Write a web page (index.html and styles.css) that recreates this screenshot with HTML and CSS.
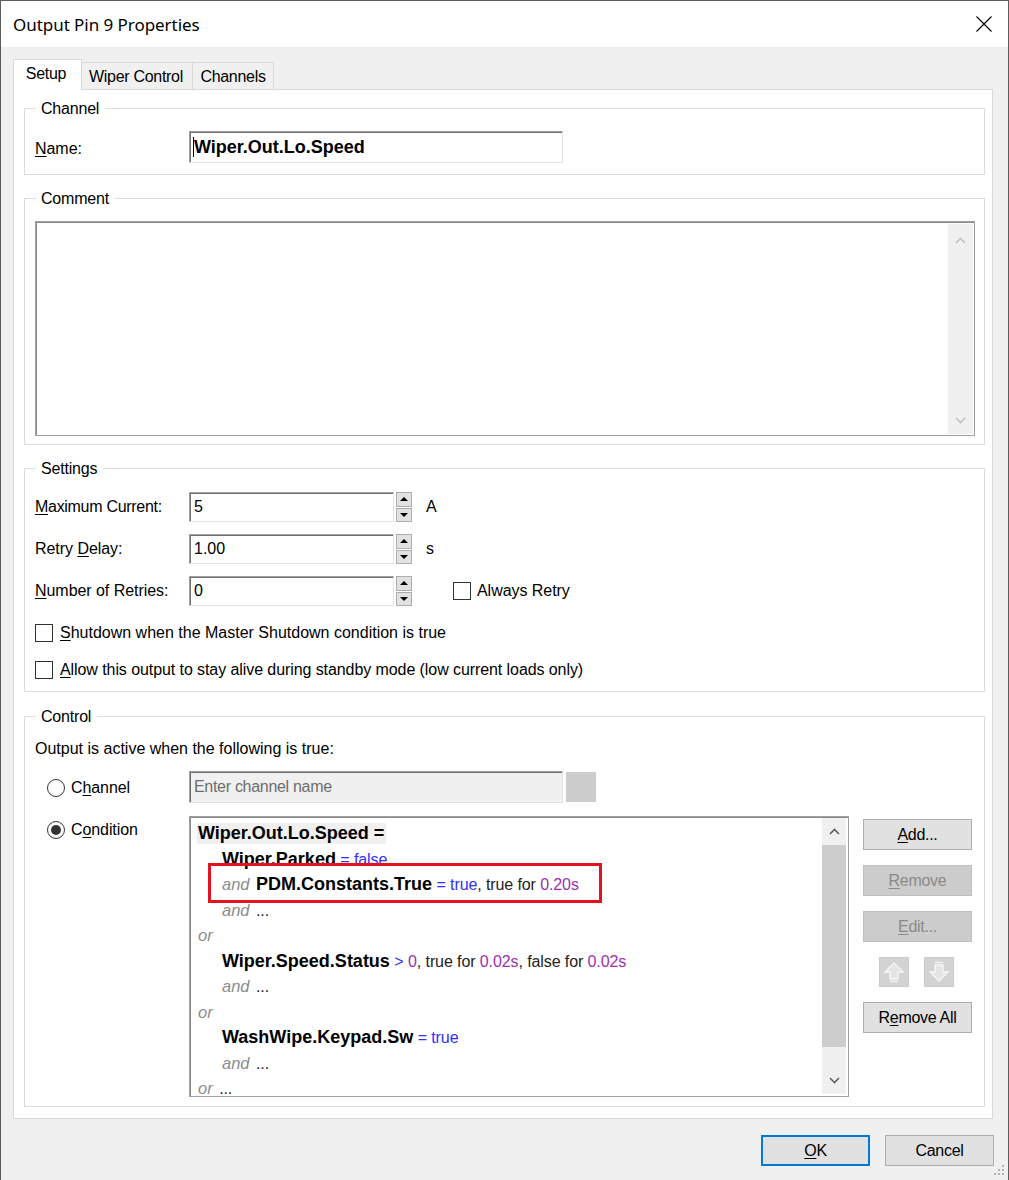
FILE: index.html
```html
<!DOCTYPE html>
<html>
<head>
<meta charset="utf-8">
<title>Output Pin 9 Properties</title>
<link rel="stylesheet" href="styles.css">
</head>
<body>
<div class="window">
  <div class="titlebar">
    <span class="title">Output Pin 9 Properties</span>
    <svg class="close" width="16" height="16" viewBox="0 0 16 16"><path d="M0.5 0.5 L15.5 15.5 M15.5 0.5 L0.5 15.5" stroke="#000" stroke-width="1.1" fill="none"/></svg>
  </div>
  <div class="client">
    <div class="tabs">
      <div class="tab active">Setup</div>
      <div class="tab t-wiper">Wiper Control</div>
      <div class="tab t-chan">Channels</div>
    </div>
    <div class="tabpage">
      <fieldset class="group g-channel">
        <legend>Channel</legend>
        <div class="row">
          <span class="lbl name-lbl"><u>N</u>ame:</span>
          <div class="field name-field"><span class="caret"></span>Wiper.Out.Lo.Speed</div>
        </div>
      </fieldset>

      <fieldset class="group g-comment">
        <legend>Comment</legend>
        <div class="memo">
          <div class="memo-body"></div>
          <div class="vscroll disabled">
            <svg width="11" height="7" viewBox="0 0 11 7"><path d="M1 6 L5.5 1.5 L10 6" stroke="#c2c2c2" stroke-width="1.6" fill="none"/></svg>
            <svg width="11" height="7" viewBox="0 0 11 7"><path d="M1 1 L5.5 5.5 L10 1" stroke="#c2c2c2" stroke-width="1.6" fill="none"/></svg>
          </div>
        </div>
      </fieldset>

      <fieldset class="group g-settings">
        <legend>Settings</legend>
        <div class="srow">
          <span class="lbl lbl-max"><u>M</u>aximum Current:</span>
          <div class="field num">5</div>
          <div class="spin"><span class="sp up"></span><span class="sp dn"></span></div>
          <span class="unit">A</span>
        </div>
        <div class="srow">
          <span class="lbl">Retry <u>D</u>elay:</span>
          <div class="field num">1.00</div>
          <div class="spin"><span class="sp up"></span><span class="sp dn"></span></div>
          <span class="unit">s</span>
        </div>
        <div class="srow">
          <span class="lbl"><u>N</u>umber of Retries:</span>
          <div class="field num">0</div>
          <div class="spin"><span class="sp up"></span><span class="sp dn"></span></div>
          <label class="check always"><span class="box"></span>Always Retry</label>
        </div>
        <label class="check c1"><span class="box"></span><span><u>S</u>hutdown when the Master Shutdown condition is true</span></label>
        <label class="check c2"><span class="box"></span><span><u>A</u>llow this output to stay alive during standby mode (low current loads only)</span></label>
      </fieldset>

      <fieldset class="group g-control">
        <legend>Control</legend>
        <div class="intro">Output is active when the following is true:</div>
        <div class="crow">
          <label class="radio"><span class="circle"></span>C<u>h</u>annel</label>
          <div class="field disabled-field">Enter channel name</div>
          <div class="pick"></div>
        </div>
        <div class="crow cond">
          <label class="radio"><span class="circle on"></span>C<u>o</u>ndition</label>
          <div class="list">
            <div class="list-body">
              <div class="ln"><span class="hl"><b class="nm">Wiper.Out.Lo.Speed =</b></span></div>
              <div class="ln i1"><b class="nm">Wiper.Parked</b> <span class="v">= false</span></div>
              <div class="ln i1"><i class="kw">and</i> <b class="nm">PDM.Constants.True</b> <span class="v">= true</span><span class="t">, true for </span><span class="n">0.20s</span></div>
              <div class="ln i1"><i class="kw">and</i> <span class="t">...</span></div>
              <div class="ln"><i class="kw">or</i></div>
              <div class="ln i1"><b class="nm">Wiper.Speed.Status</b> <span class="v">&gt;</span> <span class="n">0</span><span class="t">, true for </span><span class="n">0.02s</span><span class="t">, false for </span><span class="n">0.02s</span></div>
              <div class="ln i1"><i class="kw">and</i> <span class="t">...</span></div>
              <div class="ln"><i class="kw">or</i></div>
              <div class="ln i1"><b class="nm">WashWipe.Keypad.Sw</b> <span class="v">= true</span></div>
              <div class="ln i1"><i class="kw">and</i> <span class="t">...</span></div>
              <div class="ln"><i class="kw">or</i> <span class="t">...</span></div>
              <div class="redbox"></div>
            </div>
            <div class="vscroll enabled">
              <div class="arr"><svg width="11" height="7" viewBox="0 0 11 7"><path d="M1 6 L5.5 1.5 L10 6" stroke="#606060" stroke-width="1.6" fill="none"/></svg></div>
              <div class="thumb"></div>
              <div class="track"></div>
              <div class="arr"><svg width="11" height="7" viewBox="0 0 11 7"><path d="M1 1 L5.5 5.5 L10 1" stroke="#606060" stroke-width="1.6" fill="none"/></svg></div>
            </div>
          </div>
          <div class="btncol">
            <div class="btn"><u>A</u>dd...</div>
            <div class="btn off"><u>R</u>emove</div>
            <div class="btn off"><u>E</u>dit...</div>
            <div class="arrows">
              <div class="abtn"><svg width="22" height="22" viewBox="0 0 22 22"><path d="M11 2 L20 11 L15 11 L15 18 L7 18 L7 11 L2 11 Z" fill="#e4e4e4" stroke="#f6f6f6" stroke-width="1.4"/><path d="M7 20.5 H15" stroke="#f2f2f2" stroke-width="1.5"/></svg></div>
              <div class="abtn"><svg width="22" height="22" viewBox="0 0 22 22"><path d="M7 1.5 H15" stroke="#f2f2f2" stroke-width="1.5"/><path d="M7 4 L15 4 L15 11 L20 11 L11 20 L2 11 L7 11 Z" fill="#e4e4e4" stroke="#f6f6f6" stroke-width="1.4"/></svg></div>
            </div>
            <div class="btn">R<u>e</u>move All</div>
          </div>
        </div>
      </fieldset>
    </div>
    <div class="footer">
      <div class="btn ok"><u>O</u>K</div>
      <div class="btn">Cancel</div>
    </div>
    <svg class="grip" width="12" height="12" viewBox="0 0 12 12">
      <rect x="8" y="0" width="2" height="2" fill="#b4b4b4"/>
      <rect x="4" y="4" width="2" height="2" fill="#b4b4b4"/>
      <rect x="8" y="4" width="2" height="2" fill="#b4b4b4"/>
      <rect x="0" y="8" width="2" height="2" fill="#b4b4b4"/>
      <rect x="4" y="8" width="2" height="2" fill="#b4b4b4"/>
      <rect x="8" y="8" width="2" height="2" fill="#b4b4b4"/>
    </svg>
  </div>
</div>
</body>
</html>
```

FILE: styles.css
```css
* { box-sizing: border-box; }
html, body { margin: 0; padding: 0; }
body {
  width: 1009px;
  height: 1180px;
  overflow: hidden;
  background: #f0f0f0;
  font-family: "Liberation Sans", Arial, sans-serif;
  font-size: 16px;
  color: #000;
}
u { text-decoration: underline; text-underline-offset: 2px; }

.window {
  width: 1009px;
  height: 1180px;
  border: 1px solid #5c5c5c;
  border-bottom: none;
  background: #f0f0f0;
  display: flex;
  flex-direction: column;
}
.titlebar {
  height: 46px;
  flex: none;
  background: #fff;
  display: flex;
  align-items: center;
  justify-content: space-between;
  padding: 0 16px 0 12px;
}
.title {
  font-family: "Noto Sans", sans-serif;
  font-size: 17px;
  letter-spacing: -0.05px;
  color: #000;
}
.close { display: block; }

.client {
  flex: 1;
  position: relative;
  padding: 12px 0 0 12px;
  display: flex;
  flex-direction: column;
}

/* tabs */
.tabs {
  display: flex;
  align-items: flex-end;
  height: 30px;
  position: relative;
  z-index: 2;
}
.tab {
  height: 27px;
  border: 1px solid #d9d9d9;
  border-bottom: none;
  background: #f0f0f0;
  display: flex;
  align-items: center;
  justify-content: center;
  font-size: 16px;
  letter-spacing: -0.3px;
  padding-top: 1px;
}
.tab.active {
  width: 69px;
  height: 31px;
  margin-bottom: -1px;
  background: #fff;
  padding-top: 0;
  padding-bottom: 2px;
  padding-right: 3px;
}
.t-wiper { width: 112px; margin-left: -1px; padding-right: 2px; }
.t-chan { width: 82px; margin-left: -1px; }

.tabpage {
  width: 980px;
  background: #fff;
  border: 1px solid #d9d9d9;
  padding: 9px 7px 11px 10px;
  position: relative;
  z-index: 1;
}

/* group boxes */
.group {
  margin: 0;
  width: 961px;
  border: 1px solid #dcdcdc;
  padding: 14px 10px 11px 10px;
  min-width: 0;
}
.group legend {
  margin-left: 1px;
  padding: 0 6px 0 5px;
  line-height: 19px;
  font-size: 16px;
  letter-spacing: -0.2px;
  color: #000;
}
.g-channel { padding-top: 13px; }
.g-comment { margin-top: 14px; padding-top: 13px; padding-bottom: 8px; }
.g-settings { margin-top: 14px; padding-top: 14px; padding-bottom: 10px; }
.g-control { margin-top: 15px; padding-top: 13px; padding-bottom: 9px; }

.row, .srow, .crow { display: flex; align-items: center; }
.lbl {
  width: 154px;
  flex: none;
  letter-spacing: -0.05px;
}
.lbl-max { letter-spacing: -0.3px; }
.name-lbl { padding-top: 4px; }

.field {
  height: 32px;
  background: #fff;
  border: 1px solid #e3e3e3;
  border-top-color: #a0a0a0;
  border-left-color: #a0a0a0;
  box-shadow: inset 1px 1px 0 #707070;
  display: flex;
  align-items: center;
  padding-left: 4px;
  white-space: nowrap;
}
.name-field {
  width: 374px;
  font-weight: bold;
  font-size: 18px;
  letter-spacing: 0;
  padding-left: 3px;
}
.caret {
  display: inline-block;
  width: 1px;
  height: 20px;
  background: #000;
}

/* comment memo */
.memo {
  width: 940px;
  height: 215px;
  border: 1px solid #a0a0a0;
  box-shadow: inset 1px 1px 0 #8a8a8a;
  display: flex;
  background: #fff;
  padding: 2px 1px 1px 1px;
}
.memo-body { flex: 1; }
.vscroll {
  width: 25px;
  background: #f0f0f0;
  display: flex;
  flex-direction: column;
  align-items: center;
}
.vscroll.disabled {
  justify-content: space-between;
  padding: 13px 0 10px;
}

/* settings */
.srow { height: 30px; margin-bottom: 12px; }
.srow .field.num { width: 205px; height: 30px; font-size: 16px; padding-left: 4px; }
.spin {
  width: 16px;
  height: 30px;
  margin-left: 2px;
  display: flex;
  flex-direction: column;
  gap: 1px;
}
.sp {
  flex: 1;
  background: #e1e1e1;
  border: 1px solid #adadad;
  display: flex;
  align-items: center;
  justify-content: center;
}
.sp::after {
  content: "";
  width: 0;
  height: 0;
  border-left: 4px solid transparent;
  border-right: 4px solid transparent;
}
.sp.up::after { border-bottom: 4px solid #000; }
.sp.dn::after { border-top: 4px solid #000; }
.unit { margin-left: 14px; }

.check {
  display: flex;
  align-items: center;
  letter-spacing: 0;
  white-space: nowrap;
}
.box {
  width: 18px;
  height: 18px;
  border: 1px solid #333;
  background: #fff;
  flex: none;
  margin-right: 7px;
}
.always { margin-left: 41px; letter-spacing: -0.05px; }
.always .box { margin-right: 6px; }
.check.c1 { height: 22px; margin-top: 16px; }
.check.c2 { height: 22px; margin-top: 15px; letter-spacing: -0.08px; }

/* control */
.intro { line-height: 20px; letter-spacing: 0; }
.crow { margin-top: 12px; }
.crow.cond { margin-top: 13px; align-items: flex-start; }
.radio {
  width: 154px;
  flex: none;
  display: flex;
  align-items: center;
  padding-left: 12px;
  letter-spacing: -0.1px;
  height: 32px;
  padding-top: 1px;
}
.cond .radio { height: 26px; }
.circle {
  width: 18px;
  height: 18px;
  border: 1px solid #333;
  border-radius: 50%;
  background: #fff;
  margin-right: 6px;
  flex: none;
  display: flex;
  align-items: center;
  justify-content: center;
}
.circle.on::after {
  content: "";
  width: 10px;
  height: 10px;
  border-radius: 50%;
  background: #333;
}
.disabled-field {
  width: 374px;
  background: #f0f0f0;
  color: #6d6d6d;
  letter-spacing: -0.3px;
  padding-left: 4px;
}
.pick {
  width: 30px;
  height: 30px;
  margin-left: 3px;
  background: #cccccc;
}

.list {
  width: 660px;
  height: 281px;
  border: 1px solid #a0a0a0;
  box-shadow: inset 1px 1px 0 #8a8a8a;
  background: #fff;
  display: flex;
  padding: 1px 2px 2px 1px;
  flex: none;
}
.list-body {
  flex: 1;
  position: relative;
  padding: 3px 0 0 7px;
  overflow: hidden;
  white-space: nowrap;
}
.ln {
  height: 25.5px;
  line-height: 25.5px;
  white-space: pre;
}
.ln.i1 { padding-left: 24px; }
.hl { background: #f0f0f0; padding: 2px 2px 2px 1px; margin-left: -1px; }
.nm { font-size: 18px; font-weight: bold; letter-spacing: 0; color: #000; }
.kw { font-size: 16.5px; color: #8c8c8c; letter-spacing: 0; margin-right: 2px; }
.v { font-size: 16px; color: #2f2fff; letter-spacing: -0.1px; }
.t { font-size: 16px; color: #222; letter-spacing: -0.1px; }
.n { font-size: 16px; color: #9b30b0; letter-spacing: -0.1px; }
.redbox {
  position: absolute;
  left: 17px;
  top: 45px;
  width: 394px;
  height: 40px;
  border: 3px solid #e3121f;
}
.vscroll.enabled { width: 24px; }
.vscroll .arr {
  height: 27px;
  width: 100%;
  display: flex;
  align-items: center;
  justify-content: center;
}
.thumb { width: 24px; height: 202px; background: #cdcdcd; }
.track { flex: 1; }

.btncol {
  margin-left: 14px;
  width: 109px;
  display: flex;
  flex-direction: column;
  gap: 15px;
  padding-top: 3px;
}
.btn {
  height: 31px;
  width: 109px;
  background: #e1e1e1;
  border: 1px solid #adadad;
  display: flex;
  align-items: center;
  justify-content: center;
  letter-spacing: -0.3px;
  color: #000;
}
.btn.off {
  background: #cccccc;
  border-color: #bfbfbf;
  color: #8a8a8a;
}
.arrows {
  display: flex;
  gap: 15px;
  padding-left: 16px;
}
.abtn {
  width: 30px;
  height: 30px;
  background: #d3d3d3;
  border: 1px solid #cacaca;
  display: flex;
  align-items: center;
  justify-content: center;
}

/* footer */
.footer {
  display: flex;
  justify-content: flex-end;
  gap: 15px;
  width: 981px;
  margin-top: 16px;
}
.footer .btn { width: 109px; height: 31px; }
.btn.ok { border: 2px solid #0078d7; }
.grip {
  position: absolute;
  right: 2px;
  bottom: 3px;
}
```
